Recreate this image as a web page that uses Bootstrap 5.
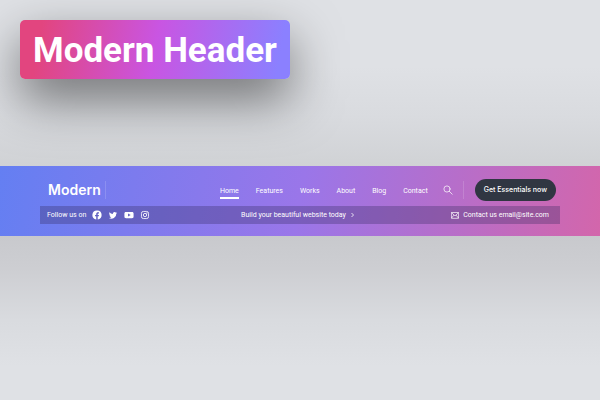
<!DOCTYPE html>
<html lang="en">
<head>
<meta charset="utf-8">
<meta name="viewport" content="width=device-width, initial-scale=1">
<title>Modern Header</title>
<link href="https://cdn.jsdelivr.net/npm/bootstrap@5.3.0/dist/css/bootstrap.min.css" rel="stylesheet">
<style>
body{font-family:Roboto,"Liberation Sans",sans-serif;font-size:7px;line-height:10px;background:#dfe1e5;min-height:100vh;overflow-x:hidden}
.promo{padding:20px 20px 87px;background:linear-gradient(#dfe1e5 40%,#d9dbdf 70%,#d0d2d5)}
.promo-title{font-size:35px;line-height:43px;font-weight:700;padding:9px 13px 7px;border-radius:5px;background:linear-gradient(100deg,#e2457f 8%,#c955e2 50%,#8b80ff 95%);box-shadow:0 20px 50px rgba(0,0,0,.5)}
.site-header{padding:13px 40px 12px;background:linear-gradient(100deg,#647ff2 0%,#9a76e9 50%,#d366ab 100%)}
.page-fade{height:130px;background:linear-gradient(#c8c9cd,#cdced2 25%,#d9dbdf 65%,#dfe1e5)}
.main-row{height:22px;margin-bottom:5px;padding:0 4px 0 8px}
.brand{font-family:Inter,sans-serif;font-size:14px;line-height:18px;font-weight:600}
.rule{width:1px;height:18px;background:rgba(255,255,255,.15)}
.menu{gap:17px}
.menu .nav-link{font-size:7px;line-height:10px;padding:2px 0 1px;color:#fff;border-bottom:2px solid transparent;margin-top:2px}
.menu .nav-link.active{border-color:#fff}
.icon-btn{line-height:0}
.search-btn{margin:0 10px 0 15px}
.cta{font-family:Inter,sans-serif;font-size:7px;line-height:10px;padding:6px 9px;margin-left:11px;background:#303642;color:#fff;font-weight:500;border:0}
.cta:hover{background:#404756;color:#fff}
.info-row{height:18px;padding:0 11px 0 7px;background:rgba(50,40,90,.31)}
.info-row a{color:#fff;text-decoration:none}
.info-row svg,.icon-btn svg{display:block}
.info-row>*{flex:1 1 0}
.socials{gap:6px}
</style>
<script src="https://cdn.jsdelivr.net/npm/bootstrap@5.3.0/dist/js/bootstrap.bundle.min.js"></script>
</head>
<body>
<section class="promo d-flex">
  <h1 class="promo-title text-white text-nowrap m-0">Modern Header</h1>
</section>
<header class="site-header text-white text-nowrap">
  <div class="main-row d-flex align-items-center">
    <a class="brand text-white text-decoration-none" href="#">Modern</a>
    <span class="rule ms-1"></span>
    <nav class="ms-auto" aria-label="Main">
      <ul class="menu nav flex-nowrap">
        <li class="nav-item"><a class="nav-link active" aria-current="page" href="#">Home</a></li>
        <li class="nav-item"><a class="nav-link" href="#">Features</a></li>
        <li class="nav-item"><a class="nav-link" href="#">Works</a></li>
        <li class="nav-item"><a class="nav-link" href="#">About</a></li>
        <li class="nav-item"><a class="nav-link" href="#">Blog</a></li>
        <li class="nav-item"><a class="nav-link" href="#">Contact</a></li>
      </ul>
    </nav>
    <button class="icon-btn search-btn btn border-0 p-0 text-white" type="button" aria-label="Search">
      <svg width="10" height="10" viewBox="0 0 10 10" fill="none" stroke="currentColor" stroke-width=".8" stroke-linecap="round" opacity=".9"><circle cx="4" cy="4" r="3.1"/><path d="M6.3 6.3 9.2 9.2"/></svg>
    </button>
    <span class="rule"></span>
    <button class="cta btn rounded-pill" type="button">Get Essentials now</button>
  </div>
  <div class="info-row d-flex align-items-center">
    <div class="socials d-flex align-items-center">
      <span>Follow us on</span>
      <a href="#" aria-label="Facebook"><svg width="10" height="10" viewBox="-1 -1 26 26" fill="currentColor"><path d="M24 12a12 12 0 1 0-14 11.900v-8.400H7V12h3V9.400c0-3 1.800-4.700 4.600-4.700 1.300 0 2.600.2 2.600.2v3h-1.500c-1.500 0-1.900.9-1.900 1.800V12h3.300l-.5 3.500h-2.800v8.400A12 12 0 0 0 24 12z"/></svg></a>
      <a href="#" aria-label="Twitter"><svg width="10" height="10" viewBox="1 1 22 22" fill="currentColor"><path d="M21 7.100c-.7.3-1.400.5-2.100.6.8-.5 1.300-1.200 1.600-2-.7.4-1.500.7-2.400.9a3.700 3.700 0 0 0-6.300 3.400A10.500 10.500 0 0 1 4.200 6.100a3.700 3.700 0 0 0 1.100 4.900c-.6 0-1.200-.2-1.700-.5 0 1.800 1.300 3.400 3 3.700-.5.1-1.100.2-1.700.1.500 1.500 1.800 2.500 3.400 2.600A7.500 7.500 0 0 1 3 18.400 10.500 10.500 0 0 0 19.200 9c.7-.5 1.300-1.200 1.800-1.900z"/></svg></a>
      <a href="#" aria-label="YouTube"><svg width="10" height="10" viewBox="0 0 24 24" fill="currentColor"><path fill-rule="evenodd" d="M5 4.500h14c3 0 4 1.500 4 4v7c0 2.500-1 4-4 4H5c-3 0-4-1.500-4-4v-7c0-2.500 1-4 4-4zM9.700 8.500v7l6.300-3.500z"/></svg></a>
      <a href="#" aria-label="Instagram"><svg width="10" height="10" viewBox="0 0 24 24" fill="none" stroke="currentColor" stroke-width="2"><rect x="3.500" y="3.500" width="17" height="17" rx="4.500"/><circle cx="12" cy="12" r="4"/><circle cx="16.700" cy="7.300" r=".6"/></svg></a>
    </div>
    <a href="#" class="d-flex align-items-center justify-content-center">Build your beautiful website today
      <svg class="ms-1" width="5" height="6" viewBox="0 0 5 6" fill="none" stroke="currentColor" stroke-width=".8"><path d="m1.500 1 2 2-2 2"/></svg></a>
    <a href="mailto:email@site.com" class="d-flex align-items-center justify-content-end gap-1">
      <svg width="8" height="7" viewBox="0 0 8 7" fill="none" stroke="currentColor" stroke-width=".7"><path d="M.4.5h7.200v5.800H.4zM.5.7 4 3.900 7.500.7M.5 6.100l2.400-3M7.500 6.100l-2.400-3"/></svg>
      Contact us email@site.com</a>
  </div>
</header>
<div class="page-fade"></div>
</body>
</html>
